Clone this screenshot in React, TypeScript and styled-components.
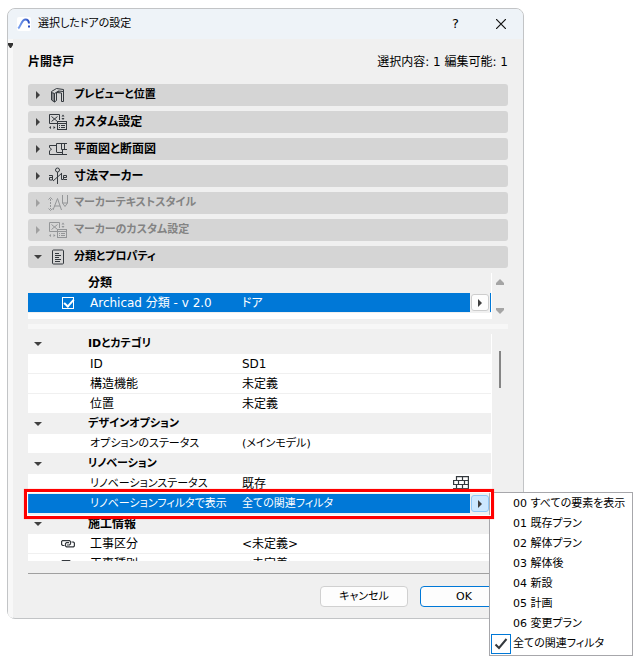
import React, { useState } from "react";
import styled, { createGlobalStyle, css } from "styled-components";

const GlobalStyle = createGlobalStyle`
  * { box-sizing: border-box; }
  body { margin: 0; background: #fff; }
  body, button, input, table {
    font-family: "DejaVu Sans", "Noto Sans CJK JP", sans-serif;
    font-size: 12px;
    line-height: 18px;
    color: #000;
    font-feature-settings: "palt";
  }
  button { border: 0; padding: 0; background: none; text-align: left; }
`;

const Page = styled.main`
  padding: 8px 118px 46px 7px;
`;

const Dialog = styled.section`
  border: 1px solid #c2c4c6;
  border-radius: 8px;
  background: #f0f0f0;
`;

const TitleBar = styled.header`
  display: flex;
  align-items: center;
  height: 30px;
  padding-left: 9px;
  background: #eef3f8;
  border-radius: 7px 7px 0 0;
`;

const Title = styled.h1`
  flex: 1;
  margin: 0 0 0 7px;
  font-size: 11px;
  font-weight: 400;
`;

const TitleButton = styled.button`
  display: flex;
  align-items: center;
  justify-content: center;
  width: 45px;
  height: 30px;
  font-size: 13px;
`;

const Body = styled.div`
  display: flex;
`;

const SideStrip = styled.div`
  width: 5px;
  padding-top: 4px;
  background: #f8f8f8;
  border-radius: 0 0 0 7px;
  svg { display: block; }
`;

const Content = styled.div`
  flex: 1;
  min-width: 0;
  padding: 14px 15px 11px 15px;
`;

const Summary = styled.div`
  display: flex;
  justify-content: space-between;
  margin-bottom: 13px;
`;

const Sections = styled.div`
  display: flex;
  flex-direction: column;
  gap: 5px;
`;

const SectionButton = styled.button<{ $small: boolean }>`
  display: flex;
  align-items: center;
  height: 22px;
  padding-left: 6px;
  border-radius: 3px;
  background: #d5d5d5;
  font-size: ${(p) => (p.$small ? "11px" : "12px")};
  font-weight: 700;
  color: #000;
  &:disabled { color: #838383; }
  &:disabled svg { opacity: 0.4; }
`;

const SectionIcon = styled.span`
  display: flex;
  width: 20px;
  margin: 0 6px;
`;

const Arrow = styled.span<{ $open?: boolean }>`
  width: 0;
  height: 0;
  ${(p) =>
    p.$open
      ? css`
          border: 4px solid transparent;
          border-top-color: #404040;
          border-bottom-width: 0;
        `
      : css`
          margin: 0 2px;
          border: 4px solid transparent;
          border-left-color: #404040;
          border-right-width: 0;
        `}
  ${SectionButton}:disabled & { opacity: 0.35; }
`;

const SectionArrow = styled.span`
  display: flex;
  width: 8px;
`;

const Area = styled.div`
  position: relative;
  display: flex;
  margin-top: 5px;
`;

const ListFrame = styled.div<{ $tall?: boolean }>`
  flex: 1;
  min-width: 0;
  height: ${(p) => (p.$tall ? "227px" : "46px")};
  overflow: hidden;
  background: #fff;
  border-right: 1px solid #fff;
`;

const ScrollColumn = styled.div`
  display: flex;
  flex-direction: column;
  align-items: center;
  justify-content: space-between;
  width: 16px;
  padding: 6px 0 5px;
`;

const ScrollArrow = styled.button<{ $down?: boolean }>`
  width: 8px;
  height: 6px;
  background: #a5a5a5;
  clip-path: ${(p) =>
    p.$down
      ? "polygon(0 0, 100% 0, 100% 33%, 50% 100%, 0 33%)"
      : "polygon(50% 0, 100% 67%, 100% 100%, 0 100%, 0 67%)"};
`;

const Thumb = styled.div`
  width: 2px;
  height: 37px;
  margin-top: 11px;
  background: #858585;
`;

const Splitter = styled.div`
  height: 5px;
  margin-top: 5px;
  background: #f7f7f7;
`;

const Table = styled.table`
  width: 100%;
  table-layout: fixed;
  border-spacing: 0;
`;

const LeadColumn = styled.col`width: 60px;`;
const NameColumn = styled.col`width: 154px;`;
const ActionColumn = styled.col`width: 38px;`;

const Cell = styled.td<{ $small?: boolean }>`
  height: 20px;
  padding: 0;
  border-bottom: 1px solid #f0f0f0;
  white-space: nowrap;
  font-size: ${(p) => (p.$small ? "11px" : "12px")};
  font-weight: 400;
  text-align: left;
  svg { display: block; }
`;

const LeadCell = styled(Cell)`
  padding-left: 33px;
  input { display: block; }
`;

const NameCell = styled(Cell).attrs({ as: "th", scope: "row" })`
  padding-left: 2px;
`;

const ActionCell = styled(Cell)`
  padding-left: 18px;
`;

const GroupRow = styled.tr`
  background: #f0f0f0;
  ${LeadCell} { padding-left: 6px; }
  ${NameCell} { padding-left: 0; font-weight: 700; }
  ${LeadCell} > span { display: block; }
`;

const ItemRow = styled.tr<{ $selected?: boolean }>`
  ${(p) =>
    p.$selected &&
    css`
      background: #0078d7;
      color: #fff;
    `}
`;

const BrickCell = styled(Cell)`
  vertical-align: bottom;
  svg { margin-bottom: 1px; }
`;

const Check = styled.input`
  appearance: none;
  width: 12px;
  height: 12px;
  margin: 0 0 0 1px;
  border: 1px solid #fff;
  &:checked::after {
    content: "";
    display: block;
    width: 8px;
    height: 4px;
    margin: 1px;
    border: solid #fff;
    border-width: 0 0 2px 2px;
    transform: rotate(-48deg);
  }
`;

const ActionWrap = styled.span`
  display: flex;
  height: 19px;
  margin-left: -1px;
  margin-right: 1px;
  padding: 1px;
  background: #f0f0f0;
`;

const PopupButton = styled.button<{ $active?: boolean }>`
  display: flex;
  align-items: center;
  justify-content: center;
  flex: 1;
  border: 1px solid ${(p) => (p.$active ? "#90c8f6" : "#cdcdcd")};
  border-radius: 3px;
  background: ${(p) => (p.$active ? "#cce8ff" : "#fdfdfd")};
`;

const Highlight = styled.div`
  position: absolute;
  z-index: 3;
  top: 155px;
  left: -4px;
  right: 14px;
  height: 30px;
  border: 3px solid #f00;
  box-shadow: 0 0 1px #f88, inset 0 0 1px 1px #fff;
  pointer-events: none;
`;

const Menu = styled.div`
  position: absolute;
  z-index: 2;
  top: 158px;
  left: calc(100% - 19px);
  width: 144px;
  padding: 1px;
  border: 1px solid #a7a7ab;
  background: #fff;
`;

const MenuItem = styled.button`
  display: grid;
  grid-template-columns: 20px 1fr;
  gap: 2px;
  align-items: center;
  width: 100%;
  height: 20px;
  font-size: 11px;
  white-space: nowrap;
`;

const MenuMark = styled.span<{ $on: boolean }>`
  display: flex;
  align-items: center;
  justify-content: center;
  height: 20px;
  border: 1px solid ${(p) => (p.$on ? "#0078d7" : "transparent")};
`;

const Footer = styled.footer`
  display: flex;
  justify-content: flex-end;
  gap: 12px;
  margin-top: 12px;
  padding-top: 12px;
  border-top: 1px solid #a0a0a0;
`;

const DialogButton = styled.button<{ $primary?: boolean }>`
  width: 88px;
  height: 21px;
  border: 1px solid ${(p) => (p.$primary ? "#0078d7" : "#d0d0d0")};
  border-radius: 4px;
  background: #fdfdfd;
  font-size: 11px;
  text-align: center;
`;

const ink = "#34393e";

const AppLogo = () => (
  <svg width="14" height="14" viewBox="0 0 14 14" fill="none">
    <defs>
      <linearGradient id="arc" x1="0" x2="1">
        <stop offset="0" stopColor="#7da4f0" />
        <stop offset="1" stopColor="#2b4fc4" />
      </linearGradient>
    </defs>
    <rect width="14" height="14" rx="2" fill="#fff" />
    <path d="M1.2 11.5C4 9 4.500 2.500 8.500 2.500C11 2.500 11.800 4 12 6.500" stroke="url(#arc)" strokeWidth="2" />
    <rect x="11" y="8.500" width="2" height="2" fill="#2b4fc4" />
  </svg>
);

const CloseIcon = () => (
  <svg width="10" height="10" viewBox="0 0 10 10" stroke="#111" strokeWidth="1.2">
    <path d="M0 0L10 10M10 0L0 10" />
  </svg>
);

const DoorIcon = () => (
  <svg width="20" height="16" viewBox="0 0 20 16" fill="none" stroke={ink}>
    <path d="M3.500 4.500L8.500 1.500L15.500 2.500V14.500H13.500V6L8.500 5.500V13.500L6.500 15V6.500L3.500 5.500ZM3.500 5V13L6.500 15M5 6V14M6.500 6.500L10.500 4L15 4.500M8.500 5.500L11 4.500V5.500" />
  </svg>
);

const CustomIcon = () => (
  <svg width="20" height="18" viewBox="0 0 20 18" fill="none" stroke={ink}>
    <path d="M9 10.500H1.500V1.500H11.500V7M3.500 3.500L9.500 8.500M9.500 3.500L3.500 8.500" />
    <rect x="9.500" y="8.500" width="9" height="8" />
    <path d="M9.500 10.500H18.500M11 12.500H12M13 12.500H17M11 14.500H12M13 14.500H17" />
    <path d="M13.500 3.500L15 1.500L16.500 3.500ZM13.500 5L15 7L16.500 5ZM3 13L1 14.500L3 16ZM5.500 13L7.500 14.500L5.500 16Z" fill={ink} stroke="none" />
  </svg>
);

const PlanIcon = () => (
  <svg width="20" height="16" viewBox="0 0 20 16" fill="none" stroke={ink}>
    <path d="M8.500 4.500H1.500V6.500L3.500 8L1.500 10V13.500H19M8.500 11V2.500H19M8.500 11.500H14.500M13.500 2.500V8.500H19M16.500 2.500V8.500M14.500 8.500V13.500" />
  </svg>
);

const MarkerIcon = () => (
  <svg width="20" height="18" viewBox="0 0 20 18" fill="none" stroke={ink}>
    <circle cx="9.500" cy="3" r="2" />
    <path d="M9.500 5V17M5 14L14 6M13.500 6V12.500H15" />
    <path d="M1 8.500H4.500V13H1.500V10.500H4.500M15.500 10.500H18.500V8.500H15.500V12.500H19" />
  </svg>
);

const TextStyleIcon = () => (
  <svg width="20" height="18" viewBox="0 0 20 18" fill="none" stroke={ink}>
    <path d="M2.500 5V15" strokeDasharray="2 1" />
    <path d="M.500 5.500L2.500 3.500L4.500 5.500M.500 14.500L2.500 16.500L4.500 14.500M5 16L9.500 4.500L13.500 16M6.500 12H12M14.500 1V9L17 12.500L19.500 9V1M14.500 9H19.500" />
  </svg>
);

const ListIcon = () => (
  <svg width="20" height="16" viewBox="0 0 20 16" fill="none" stroke={ink}>
    <rect x="4.500" y="1" width="11" height="14" rx="1" />
    <path d="M7 4.500H11M7 6.500H13M7 8.500H11M7 10.500H13M7 12.500H12" />
  </svg>
);

const LinkIcon = () => (
  <svg width="14" height="8" viewBox="0 0 14 8" fill="none" stroke={ink} strokeWidth="1.2">
    <path d="M3.500 5.500H1.500L.600 4.500V1.500L1.500.600H8.500L9.500 1.500V4L8.500 5H6M10.500 2H12.500L13.400 3V6L12.500 6.800H5.500L4.500 6V3.500L5.500 2.600H8" />
  </svg>
);

const BrickIcon = () => (
  <svg width="16" height="16" viewBox="0 0 16 16" fill="none" stroke={ink} strokeWidth="1.2">
    <path d="M3.500.600H15.400V4.500H3.500ZM.600 4.500H15.400V8.500H.600ZM3.500 8.500H15.400V12.500H3.500ZM.600 12.500H15.400V15.400H.600ZM9.500.600V4.500M5.500 4.500V8.500M11.500 4.500V8.500M9.500 8.500V12.500M5.500 12.500V15.400M11.500 12.500V15.400" />
  </svg>
);

const TickIcon = () => (
  <svg width="14" height="12" viewBox="0 0 14 12" fill="none" stroke={ink} strokeWidth="2">
    <path d="M1.500 6.500L5 10L12.500 1" />
  </svg>
);

const sections = [
  { label: "プレビューと位置", Icon: DoorIcon },
  { label: "カスタム設定", Icon: CustomIcon },
  { label: "平面図と断面図", Icon: PlanIcon },
  { label: "寸法マーカー", Icon: MarkerIcon },
  { label: "マーカーテキストスタイル", Icon: TextStyleIcon, disabled: true },
  { label: "マーカーのカスタム設定", Icon: CustomIcon, disabled: true },
  { label: "分類とプロパティ", Icon: ListIcon, open: true },
];

type Item = { name: string; value: string; linked?: boolean; brick?: boolean; selected?: boolean };

const groups: { title: string; items: Item[] }[] = [
  {
    title: "IDとカテゴリ",
    items: [
      { name: "ID", value: "SD1" },
      { name: "構造機能", value: "未定義" },
      { name: "位置", value: "未定義" },
    ],
  },
  { title: "デザインオプション", items: [{ name: "オプションのステータス", value: "(メインモデル)" }] },
  {
    title: "リノベーション",
    items: [
      { name: "リノベーションステータス", value: "既存", brick: true },
      { name: "リノベーションフィルタで表示", value: "全ての関連フィルタ", selected: true },
    ],
  },
  {
    title: "施工情報",
    items: [
      { name: "工事区分", value: "<未定義>", linked: true },
      { name: "工事種別", value: "<未定義>", linked: true },
    ],
  },
];

const filters = [
  "00 すべての要素を表示",
  "01 既存プラン",
  "02 解体プラン",
  "03 解体後",
  "04 新設",
  "05 計画",
  "06 変更プラン",
  "全ての関連フィルタ",
];

// Labels made up of five or more kana are set one size smaller.
const isKana = (text: string) => (text.match(/[\u3040-\u30ff]/g) ?? []).length > 4;

const Columns = () => (
  <colgroup>
    <LeadColumn />
    <NameColumn />
    <col />
    <ActionColumn />
  </colgroup>
);

const PopupAction = ({ active, label }: { active?: boolean; label: string }) => (
  <ActionWrap>
    <PopupButton $active={active} aria-label={label} aria-haspopup="menu">
      <Arrow />
    </PopupButton>
  </ActionWrap>
);

export default function App() {
  const [filter, setFilter] = useState(filters[7]);
  const [classified, setClassified] = useState(true);

  return (
    <>
      <GlobalStyle />
      <Page>
        <Dialog role="dialog" aria-labelledby="dialog-title">
          <TitleBar>
            <AppLogo />
            <Title id="dialog-title">選択したドアの設定</Title>
            <TitleButton>?</TitleButton>
            <TitleButton aria-label="閉じる">
              <CloseIcon />
            </TitleButton>
          </TitleBar>
          <Body>
            <SideStrip>
              <svg width="5" height="5" viewBox="0 0 5 5" fill="#333">
                <path d="M0 0H5V2L3 5H2L0 2Z" />
              </svg>
            </SideStrip>
            <Content>
              <Summary>
                <strong>片開き戸</strong>
                <span>選択内容: 1 編集可能: 1</span>
              </Summary>
              <Sections>
                {sections.map(({ label, Icon, disabled, open }) => (
                  <SectionButton key={label} $small={isKana(label)} disabled={disabled} aria-expanded={!!open}>
                    <SectionArrow>
                      <Arrow $open={open} />
                    </SectionArrow>
                    <SectionIcon>
                      <Icon />
                    </SectionIcon>
                    {label}
                  </SectionButton>
                ))}
              </Sections>

              <Area>
                <ListFrame>
                  <Table>
                    <Columns />
                    <tbody>
                      <GroupRow>
                        <LeadCell />
                        <NameCell>分類</NameCell>
                        <Cell />
                        <ActionCell />
                      </GroupRow>
                      <ItemRow $selected>
                        <LeadCell>
                          <Check
                            id="classification"
                            type="checkbox"
                            checked={classified}
                            onChange={(e) => setClassified(e.target.checked)}
                          />
                        </LeadCell>
                        <NameCell>
                          <label htmlFor="classification">Archicad 分類 - v 2.0</label>
                        </NameCell>
                        <Cell>ドア</Cell>
                        <ActionCell>
                          <PopupAction label="分類を選択" />
                        </ActionCell>
                      </ItemRow>
                    </tbody>
                  </Table>
                </ListFrame>
                <ScrollColumn>
                  <ScrollArrow aria-label="上へ" />
                  <ScrollArrow $down aria-label="下へ" />
                </ScrollColumn>
              </Area>
              <Splitter />
              <Area>
                <ListFrame $tall>
                  <Table>
                    <Columns />
                    {groups.map((group) => (
                      <tbody key={group.title}>
                        <GroupRow>
                          <LeadCell>
                            <Arrow $open />
                          </LeadCell>
                          <NameCell $small={isKana(group.title)}>{group.title}</NameCell>
                          <Cell />
                          <ActionCell />
                        </GroupRow>
                        {group.items.map((item) => {
                          const value = item.selected ? filter : item.value;
                          return (
                            <ItemRow key={item.name} $selected={item.selected}>
                              <LeadCell>{item.linked && <LinkIcon />}</LeadCell>
                              <NameCell $small={isKana(item.name)}>{item.name}</NameCell>
                              <Cell $small={isKana(value)}>{value}</Cell>
                              {item.brick ? (
                                <BrickCell>
                                  <BrickIcon />
                                </BrickCell>
                              ) : (
                                <ActionCell>
                                  {item.selected && <PopupAction active label="フィルタを選択" />}
                                </ActionCell>
                              )}
                            </ItemRow>
                          );
                        })}
                      </tbody>
                    ))}
                  </Table>
                </ListFrame>
                <ScrollColumn>
                  <Thumb />
                </ScrollColumn>
                <Highlight />
                <Menu role="menu">
                  {filters.map((name) => (
                    <MenuItem
                      key={name}
                      role="menuitemradio"
                      aria-checked={name === filter}
                      onClick={() => setFilter(name)}
                    >
                      <MenuMark $on={name === filter}>{name === filter && <TickIcon />}</MenuMark>
                      {name}
                    </MenuItem>
                  ))}
                </Menu>
              </Area>
              <Footer>
                <DialogButton>キャンセル</DialogButton>
                <DialogButton $primary>OK</DialogButton>
              </Footer>
            </Content>
          </Body>
        </Dialog>
      </Page>
    </>
  );
}
